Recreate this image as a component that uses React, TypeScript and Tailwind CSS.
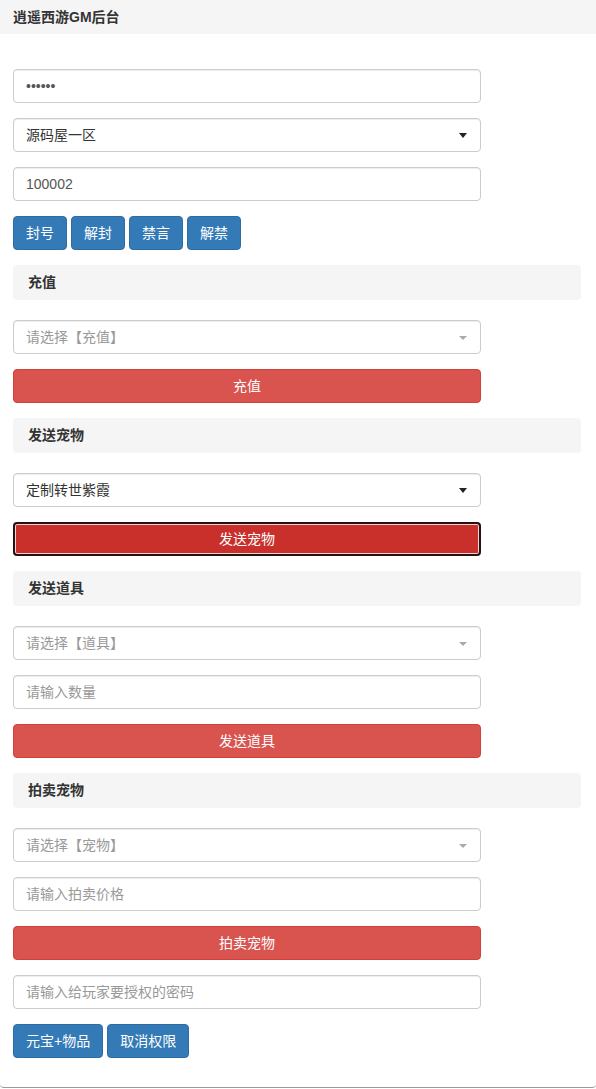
import React from "react";

const font = { fontFamily: '"Liberation Sans", "Noto Sans CJK SC", sans-serif' };

function Field({ text, placeholder }: { text?: string; placeholder?: string }) {
  return (
    <div className="mb-[15px] flex h-[34px] w-[468px] items-center rounded-[4px] border border-[#ccc] bg-white px-[12px] text-[14px] shadow-[inset_0_1px_1px_rgba(0,0,0,0.075)]">
      {text !== undefined ? (
        <span className="text-[#555]">{text}</span>
      ) : (
        <span className="text-[#999]">{placeholder}</span>
      )}
    </div>
  );
}

function Select({ text, placeholder }: { text?: string; placeholder?: string }) {
  const active = text !== undefined;
  return (
    <div className="relative mb-[15px] flex h-[34px] w-[468px] items-center rounded-[4px] border border-[#ccc] bg-white px-[12px] text-[14px] shadow-[inset_0_1px_1px_rgba(0,0,0,0.075)]">
      {active ? (
        <span className="text-[#333]">{text}</span>
      ) : (
        <span className="text-[#999]">{placeholder}</span>
      )}
      {active ? (
        <span className="absolute right-[13px] top-[14px] h-0 w-0 border-x-[4px] border-t-[5px] border-x-transparent border-t-[#222]" />
      ) : (
        <span className="absolute right-[13px] top-[15px] h-0 w-0 border-x-[4px] border-t-[4px] border-x-transparent border-t-[#aaa]" />
      )}
    </div>
  );
}

function BlueBtn({ label }: { label: string }) {
  return (
    <div className="flex h-[34px] items-center rounded-[4px] border border-[#2e6da4] bg-[#337ab7] px-[12px] text-[14px] text-white">
      {label}
    </div>
  );
}

function RedBtn({ label, focused }: { label: string; focused?: boolean }) {
  if (focused) {
    return (
      <div className="mb-[15px] flex h-[34px] w-[468px] items-center justify-center rounded-[4px] border-2 border-[#2a1010] bg-[#c9302c] text-[14px] text-white shadow-[inset_0_0_0_1px_#f3d6d5]">
        {label}
      </div>
    );
  }
  return (
    <div className="mb-[15px] flex h-[34px] w-[468px] items-center justify-center rounded-[4px] border border-[#d43f3a] bg-[#d9534f] text-[14px] text-white">
      {label}
    </div>
  );
}

function SectionHead({ title }: { title: string }) {
  return (
    <div className="mb-[20px] mr-[2px] flex h-[35px] items-center rounded-[4px] bg-[#f5f5f5] pl-[15px] text-[14px] font-bold text-[#333]">
      {title}
    </div>
  );
}

export default function App() {
  return (
    <div style={font} className="w-[596px] bg-white">
      <div className="rounded-b-[4px] border-b border-[#999] bg-white">
        <div className="flex h-[34px] items-center bg-[#f5f5f5] pl-[13px] text-[14px] font-bold text-[#333]">
          逍遥西游GM后台
        </div>
        <div className="px-[13px] pb-[14px] pt-[35px]">
          <Field text="••••••" />
          <Select text="源码屋一区" />
          <Field text="100002" />
          <div className="mb-[15px] flex gap-[4px]">
            <BlueBtn label="封号" />
            <BlueBtn label="解封" />
            <BlueBtn label="禁言" />
            <BlueBtn label="解禁" />
          </div>

          <SectionHead title="充值" />
          <Select placeholder="请选择【充值】" />
          <RedBtn label="充值" />

          <SectionHead title="发送宠物" />
          <Select text="定制转世紫霞" />
          <RedBtn label="发送宠物" focused />

          <SectionHead title="发送道具" />
          <Select placeholder="请选择【道具】" />
          <Field placeholder="请输入数量" />
          <RedBtn label="发送道具" />

          <SectionHead title="拍卖宠物" />
          <Select placeholder="请选择【宠物】" />
          <Field placeholder="请输入拍卖价格" />
          <RedBtn label="拍卖宠物" />

          <Field placeholder="请输入给玩家要授权的密码" />
          <div className="mb-[15px] flex gap-[4px]">
            <BlueBtn label="元宝+物品" />
            <BlueBtn label="取消权限" />
          </div>
        </div>
      </div>
    </div>
  );
}
